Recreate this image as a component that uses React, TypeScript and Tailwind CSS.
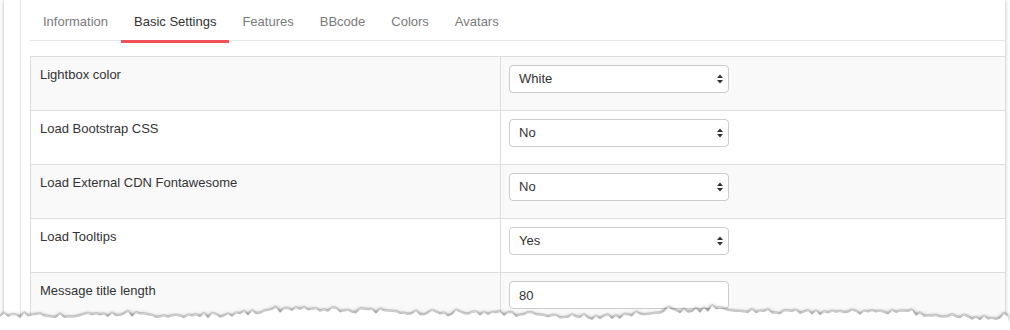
import React from 'react';

const tabs = ['Information', 'Basic Settings', 'Features', 'BBcode', 'Colors', 'Avatars'];

const rows: { label: string; value: string; kind: 'select' | 'input' }[] = [
  { label: 'Lightbox color', value: 'White', kind: 'select' },
  { label: 'Load Bootstrap CSS', value: 'No', kind: 'select' },
  { label: 'Load External CDN Fontawesome', value: 'No', kind: 'select' },
  { label: 'Load Tooltips', value: 'Yes', kind: 'select' },
  { label: 'Message title length', value: '80', kind: 'input' },
];

// jagged "torn paper" edge along the bottom
function tornPoints() {
  let seed = 11;
  const rand = () => {
    seed = (seed * 9301 + 49297) % 233280;
    return seed / 233280;
  };
  const pts: string[] = [];
  for (let x = 0; x <= 1010; x += 4) {
    const wave = Math.sin(x / 70) * 2.8 + Math.sin(x / 31 + 1) * 1.6;
    const spike = rand() > 0.82 ? -4 * rand() : 0;
    const y = 12 + wave + (rand() - 0.5) * 4.5 + spike;
    pts.push(`${x},${y.toFixed(1)}`);
  }
  return pts;
}

const SelectArrows = () => (
  <svg className="absolute right-[5px] top-1/2 -translate-y-1/2 pointer-events-none" width="8" height="12" viewBox="0 0 8 12">
    <path d="M4 1.5 L7 5 L1 5 Z" fill="#333" />
    <path d="M4 10.5 L7 7 L1 7 Z" fill="#333" />
  </svg>
);

export default function App() {
  const pts = tornPoints();
  const line = 'M' + pts.join(' L');
  const fill = line + ' L1010,40 L0,40 Z';

  return (
    <div className="relative w-[1010px] h-[330px] bg-white overflow-hidden" style={{ fontFamily: '"Liberation Sans", Arial, sans-serif' }}>
      {/* paper panel */}
      <div className="ml-[4px] mr-[5px] h-[320px] bg-white shadow-[0_0_4px_rgba(0,0,0,0.3)] flex">
        <div className="w-[17px] border-r border-[#e3e3e3]" />
        <div className="flex-1 pl-[9px]">
          {/* Tabs */}
          <div className="flex h-[41px] border-b border-[#e6e6e6] text-[13px] leading-[20px]">
            {tabs.map((t) => (
              <div key={t} className={`relative px-[13px] pt-[12px] ${t === 'Basic Settings' ? 'text-[#333]' : 'text-[#7a7a7a]'}`}>
                {t}
                {t === 'Basic Settings' && <div className="absolute left-0 right-0 top-[40px] h-[3px] bg-[#ef5159]" />}
              </div>
            ))}
          </div>

          {/* Settings table */}
          <div className="mt-[15px] border-t border-l border-[#dddddd] text-[13px] leading-[20px] text-[#333]">
            {rows.map((r, i) => (
              <div key={r.label} className={`flex h-[54px] border-b border-[#dddddd] ${i % 2 === 0 ? 'bg-[#f9f9f9]' : 'bg-white'}`}>
                <div className="w-[470px] border-r border-[#dddddd] px-[9px] pt-[8px]">{r.label}</div>
                <div className="flex-1 px-[8px] pt-[8px]">
                  <div className="relative w-[220px] h-[28px]">
                    {r.kind === 'select' ? (
                      <>
                        <select
                          defaultValue={r.value}
                          className="appearance-none w-full h-full rounded-[4px] border border-[#cccccc] bg-white pl-[9px] text-[13px] text-[#333] outline-none"
                        >
                          <option>{r.value}</option>
                        </select>
                        <SelectArrows />
                      </>
                    ) : (
                      <input
                        defaultValue={r.value}
                        className="w-full h-full rounded-[4px] border border-[#cccccc] bg-white pl-[9px] text-[13px] text-[#333] outline-none"
                      />
                    )}
                  </div>
                </div>
              </div>
            ))}
          </div>
        </div>
      </div>

      {/* torn bottom edge */}
      <svg className="absolute left-0 top-[300px]" width="1010" height="30" viewBox="0 0 1010 30">
        <defs>
          <filter id="tear" x="-5%" y="-50%" width="110%" height="250%">
            <feGaussianBlur stdDeviation="2.2" />
          </filter>
        </defs>
        <path d={line} transform="translate(0,4)" stroke="rgba(0,0,0,0.5)" strokeWidth="4" fill="none" filter="url(#tear)" />
        <path d={fill} transform="translate(0,2)" fill="#ffffff" />
        <path d={line} stroke="rgba(0,0,0,0.15)" strokeWidth="1" fill="none" />
      </svg>
    </div>
  );
}
